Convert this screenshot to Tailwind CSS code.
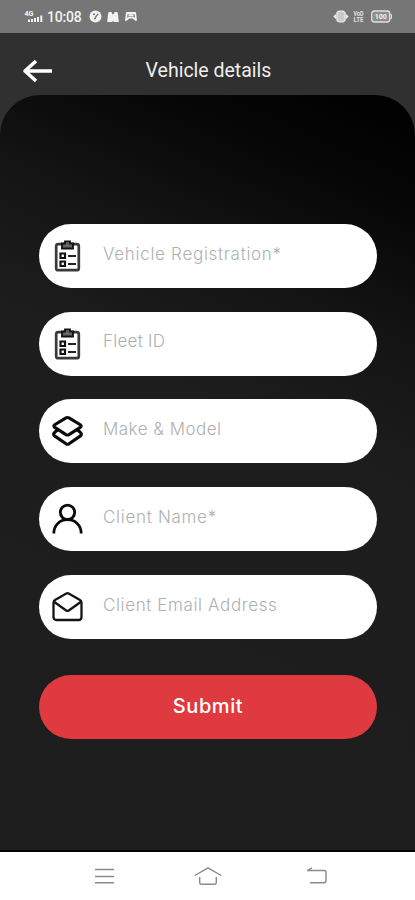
<!DOCTYPE html>
<html lang="en">

<head>
    <meta charset="UTF-8">
    <meta name="viewport" content="width=device-width, initial-scale=1.0">
    <title>Vehicle details</title>
    <script src="https://cdn.jsdelivr.net/npm/@tailwindcss/browser@4"></script>
</head>

<body class="bg-[#303030] h-screen flex flex-col overflow-hidden font-['Roboto',sans-serif]">
    <!-- Status bar -->
    <div class="h-[33px] shrink-0 bg-[#767676] flex items-center justify-between pl-6 pr-[22px] text-[#f2f2f2]">
        <div class="flex items-center">
            <svg class="w-[19px] h-[13px] overflow-visible" viewBox="0 0 19 13" fill="currentColor">
                <text x="0.5" y="6" font-size="7" font-weight="700" textLength="9" lengthAdjust="spacingAndGlyphs">4G</text>
                <path d="M4 9.500h2V12H4zM7 9h2v3H7zM10 8h2v4h-2zM13 7h2v5h-2zM16.300 5.500h2V12h-2z" />
            </svg>
            <span class="ml-[4px] text-[14px] leading-none font-medium tracking-[-0.200px]">10:08</span>
            <svg class="ml-[7px] w-[13px] h-[13px]" viewBox="0 0 13 13">
                <circle cx="6.500" cy="6.500" r="6" fill="#f2f2f2" />
                <path d="M4 4.500L6 4M9.200 3.800L6.200 7.500M5 8.500h2" fill="none" stroke="#767676" stroke-width="1.300" />
            </svg>
            <svg class="ml-[5px] w-[12px] h-[12px]" viewBox="0 0 12 12" fill="currentColor">
                <path d="M1 3L1.700 1h2.800l.8 2.300h1.400L7.500 1h2.800L11 3l.8 8H6.500V10h-1v1H.2z" />
            </svg>
            <svg class="ml-[6px] w-[12px] h-[11px]" viewBox="0 0 12 11" fill="none" stroke="currentColor" stroke-width="1.800" stroke-linejoin="round">
                <path d="M1 9.200L1.800 2h8.400l.8 7.200-3-2.700H4zM3.500 4.200h5" />
            </svg>
        </div>
        <div class="flex items-center">
            <svg class="w-[16px] h-[13px]" viewBox="0 0 16 13">
                <path d="M.3 6.500L3.500 3.500v6zM15.700 6.500l-3.200-3v6z" fill="#ededed" />
                <path d="M4 2.500L6 1h4l2 1.500v8L10 12H6l-2-1.500z" fill="#c9c9c9" stroke="#ededed" stroke-width="1.200" />
            </svg>
            <svg class="ml-[4px] w-[11px] h-[13px] overflow-visible" viewBox="0 0 11 13" fill="#e2e2e2" font-weight="700">
                <text x="0.5" y="6.200" font-size="6.500" textLength="10" lengthAdjust="spacingAndGlyphs">VoD</text>
                <text x="0.5" y="12" font-size="6.500" textLength="10" lengthAdjust="spacingAndGlyphs">LTE</text>
            </svg>
            <svg class="ml-[6px] w-[23px] h-[13px]" viewBox="0 0 23 13">
                <rect x="1.700" y="1" width="18" height="11" rx="2.500" fill="#8d8d8d" stroke="#e0e0e0" stroke-width="1.300" />
                <path d="M20.500 4c1.300.6 1.300 4.400 0 5" fill="none" stroke="#e0e0e0" stroke-width="1.300" />
                <text x="4.700" y="8.900" font-size="7" font-weight="700" fill="#f2f2f2" textLength="12" lengthAdjust="spacingAndGlyphs">100</text>
            </svg>
        </div>
    </div>

    <!-- Header -->
    <header class="h-[62px] shrink-0 grid grid-cols-[60px_1fr_58px] items-center pt-[14px] text-white">
        <button type="button" class="pl-[22px]" aria-label="Back">
            <svg class="w-[31px] h-[24px]" viewBox="0 0 31 24" fill="none" stroke="currentColor" stroke-width="3.600" stroke-linejoin="round">
                <path d="M3 12H30M14 2L3 12 14 22" />
            </svg>
        </button>
        <h1 class="text-center text-[19.500px] leading-none text-[#ededed] whitespace-nowrap">Vehicle details</h1>
    </header>

    <main class="grow rounded-t-[40px] border-b-2 border-black bg-[linear-gradient(205deg,#000_0%,#060606_12%,#141414_27%,#1d1d1d_42%,#1e1e1e_100%)] pt-[129px] pl-[39px] pr-[38px] font-['Inter',sans-serif]">
        <form id="vehicleForm" class="flex flex-col gap-[23.700px]">
            <label class="h-16 rounded-full bg-white flex items-center pl-[13px]">
                <svg class="w-[31px] h-[32px] shrink-0" viewBox="0 0 31 32" fill="none">
                    <rect x="4.200" y="4.200" width="22.600" height="26" rx="2" stroke="#3a3a3a" stroke-width="2.700" />
                    <path d="M10 3.500h3V1.300h5v2.200h3v5H10z" fill="#666" stroke="#111" stroke-width="1.800" />
                    <path d="M8.500 13.500h4.500V18H8.500zM8.500 21.500h4.500V26H8.500z" stroke="#111" stroke-width="2.200" />
                    <path d="M16 16H24M16 24H24" stroke="#222" stroke-width="1.800" />
                </svg>
                <span class="pl-5 pb-[3px] text-[17px] font-light text-[#b0b0b0] tracking-[0.700px]">Vehicle Registration*</span>
            </label>
            <label class="h-16 rounded-full bg-white flex items-center pl-[13px]">
                <svg class="w-[31px] h-[32px] shrink-0" viewBox="0 0 31 32" fill="none">
                    <rect x="4.200" y="4.200" width="22.600" height="26" rx="2" stroke="#3a3a3a" stroke-width="2.700" />
                    <path d="M10 3.500h3V1.300h5v2.200h3v5H10z" fill="#666" stroke="#111" stroke-width="1.800" />
                    <path d="M8.500 13.500h4.500V18H8.500zM8.500 21.500h4.500V26H8.500z" stroke="#111" stroke-width="2.200" />
                    <path d="M16 16H24M16 24H24" stroke="#222" stroke-width="1.800" />
                </svg>
                <span class="pl-5 pb-[3px] text-[17px] font-light text-[#b0b0b0] tracking-[0.250px]">Fleet ID</span>
            </label>
            <label class="h-16 rounded-full bg-white flex items-center pl-[13px]">
                <svg class="w-[31px] h-[32px] shrink-0" viewBox="0 0 31 32" fill="none" stroke="#0a0a0a" stroke-width="3.100" stroke-linejoin="round" stroke-linecap="round">
                    <path d="M14 2.900q1.500-.9 3 0L28.300 9.800q1.800 1.300 0 2.600L17 19.600q-1.500.9-3 0L2.700 12.400q-1.800-1.300 0-2.600z" />
                    <path d="M5.500 15L2.500 17.500q-1.600 1.600 0 3.400L14 28.800q1.500.9 3 0l11.500-7.900q1.600-1.800 0-3.400L25.500 15" />
                </svg>
                <span class="pl-5 pb-[3px] text-[17px] font-light text-[#b0b0b0] tracking-[0.480px]">Make &amp; Model</span>
            </label>
            <label class="h-16 rounded-full bg-white flex items-center pl-[13px]">
                <svg class="w-[31px] h-[32px] shrink-0" viewBox="0 0 31 32" fill="none" stroke="#0a0a0a" stroke-width="2.800">
                    <circle cx="15.500" cy="9.300" r="7.200" />
                    <path d="M1.800 30.500C1.800 22 8 16.700 15.500 16.700S29.200 22 29.200 30.500" />
                </svg>
                <span class="pl-5 pb-[3px] text-[17px] font-light text-[#b0b0b0] tracking-[0.700px]">Client Name*</span>
            </label>
            <label class="h-16 rounded-full bg-white flex items-center pl-[13px]">
                <svg class="w-[31px] h-[32px] shrink-0" viewBox="0 0 31 32" fill="none" stroke="#151515" stroke-width="2.300" stroke-linejoin="round">
                    <path d="M14.300 2.600q1.200-.7 2.400 0L28 9q1.500.9 1.500 2.700V26q0 3-3 3h-22q-3 0-3-3V11.700Q1.500 9.900 3 9z" />
                    <path d="M2 10.700l12.200 8.800q1.300.9 2.600 0L29 10.700" />
                </svg>
                <span class="pl-5 pb-[3px] text-[17px] font-light text-[#b0b0b0] tracking-[0.620px]">Client Email Address</span>
            </label>
            <button type="submit" class="mt-[12.700px] h-16 pb-[3px] rounded-full bg-[#df3a40] text-white text-[20px] font-medium tracking-[0.600px]">
                Submit
            </button>
        </form>
    </main>

    <!-- Navigation bar -->
    <nav class="h-[48px] shrink-0 bg-white flex items-center justify-between pl-[95px] pr-[87px] text-[#8a8a8a]">
        <svg class="w-[19px] h-[18px]" viewBox="0 0 19 18" fill="none" stroke="currentColor" stroke-width="1.500">
            <path d="M0 2.500h19M0 9.500h19M0 15.700h19" />
        </svg>
        <svg class="w-[28px] h-[20px] mr-[4px]" viewBox="0 0 28 20" fill="none" stroke="currentColor" stroke-width="1.400">
            <path d="M.8 9.500L14 1.800l13.200 7.700M5.700 11v5.200q0 2 2 2h12.600q2 0 2-2V11" />
        </svg>
        <svg class="w-[22px] h-[20px]" viewBox="0 0 22 20" fill="none" stroke="currentColor" stroke-width="1.400">
            <path d="M1 4.500h17q2 0 2 2v8.200q0 2-2 2H4M6 1.800L1.500 4.500" />
        </svg>
    </nav>
</body>

</html>
